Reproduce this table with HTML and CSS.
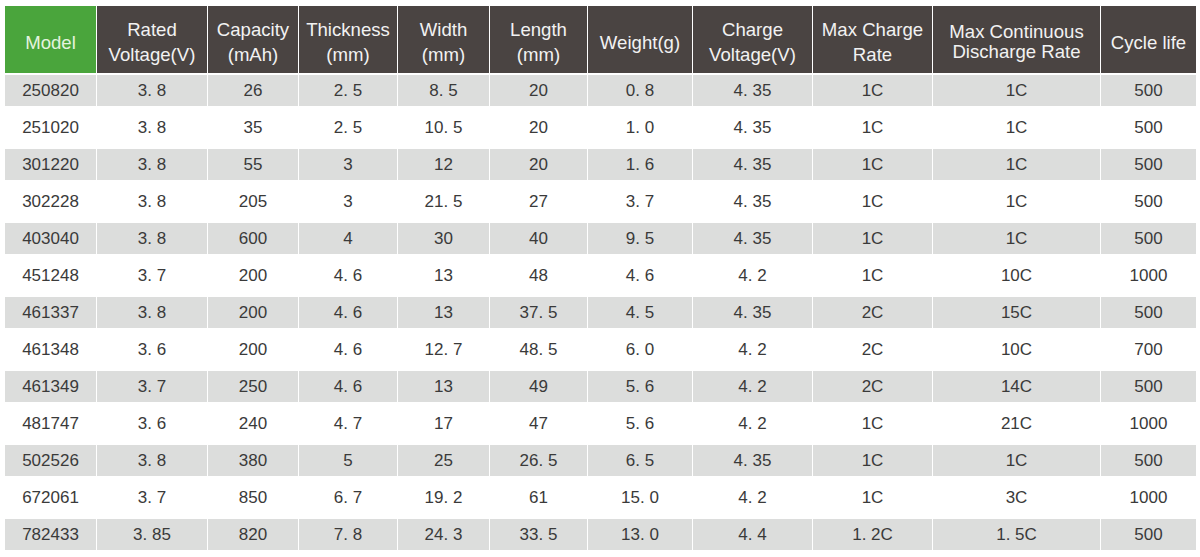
FILE: index.html
```html
<!DOCTYPE html>
<html>
<head>
<meta charset="utf-8">
<link rel="stylesheet" href="styles.css">
</head>
<body>
<div class="table">
  <div class="row head">
    <div class="cell model">Model</div>
    <div class="cell">Rated<br>Voltage(V)</div>
    <div class="cell">Capacity<br>(mAh)</div>
    <div class="cell">Thickness<br>(mm)</div>
    <div class="cell">Width<br>(mm)</div>
    <div class="cell">Length<br>(mm)</div>
    <div class="cell">Weight(g)</div>
    <div class="cell">Charge<br>Voltage(V)</div>
    <div class="cell">Max Charge<br>Rate</div>
    <div class="cell tight">Max Continuous<br>Discharge Rate</div>
    <div class="cell">Cycle life</div>
  </div>
  <div class="body">
    <div class="row shade"><div class="cell">250820</div><div class="cell">3. 8</div><div class="cell">26</div><div class="cell">2. 5</div><div class="cell">8. 5</div><div class="cell">20</div><div class="cell">0. 8</div><div class="cell">4. 35</div><div class="cell">1C</div><div class="cell">1C</div><div class="cell">500</div></div>
    <div class="row"><div class="cell">251020</div><div class="cell">3. 8</div><div class="cell">35</div><div class="cell">2. 5</div><div class="cell">10. 5</div><div class="cell">20</div><div class="cell">1. 0</div><div class="cell">4. 35</div><div class="cell">1C</div><div class="cell">1C</div><div class="cell">500</div></div>
    <div class="row shade"><div class="cell">301220</div><div class="cell">3. 8</div><div class="cell">55</div><div class="cell">3</div><div class="cell">12</div><div class="cell">20</div><div class="cell">1. 6</div><div class="cell">4. 35</div><div class="cell">1C</div><div class="cell">1C</div><div class="cell">500</div></div>
    <div class="row"><div class="cell">302228</div><div class="cell">3. 8</div><div class="cell">205</div><div class="cell">3</div><div class="cell">21. 5</div><div class="cell">27</div><div class="cell">3. 7</div><div class="cell">4. 35</div><div class="cell">1C</div><div class="cell">1C</div><div class="cell">500</div></div>
    <div class="row shade"><div class="cell">403040</div><div class="cell">3. 8</div><div class="cell">600</div><div class="cell">4</div><div class="cell">30</div><div class="cell">40</div><div class="cell">9. 5</div><div class="cell">4. 35</div><div class="cell">1C</div><div class="cell">1C</div><div class="cell">500</div></div>
    <div class="row"><div class="cell">451248</div><div class="cell">3. 7</div><div class="cell">200</div><div class="cell">4. 6</div><div class="cell">13</div><div class="cell">48</div><div class="cell">4. 6</div><div class="cell">4. 2</div><div class="cell">1C</div><div class="cell">10C</div><div class="cell">1000</div></div>
    <div class="row shade"><div class="cell">461337</div><div class="cell">3. 8</div><div class="cell">200</div><div class="cell">4. 6</div><div class="cell">13</div><div class="cell">37. 5</div><div class="cell">4. 5</div><div class="cell">4. 35</div><div class="cell">2C</div><div class="cell">15C</div><div class="cell">500</div></div>
    <div class="row"><div class="cell">461348</div><div class="cell">3. 6</div><div class="cell">200</div><div class="cell">4. 6</div><div class="cell">12. 7</div><div class="cell">48. 5</div><div class="cell">6. 0</div><div class="cell">4. 2</div><div class="cell">2C</div><div class="cell">10C</div><div class="cell">700</div></div>
    <div class="row shade"><div class="cell">461349</div><div class="cell">3. 7</div><div class="cell">250</div><div class="cell">4. 6</div><div class="cell">13</div><div class="cell">49</div><div class="cell">5. 6</div><div class="cell">4. 2</div><div class="cell">2C</div><div class="cell">14C</div><div class="cell">500</div></div>
    <div class="row"><div class="cell">481747</div><div class="cell">3. 6</div><div class="cell">240</div><div class="cell">4. 7</div><div class="cell">17</div><div class="cell">47</div><div class="cell">5. 6</div><div class="cell">4. 2</div><div class="cell">1C</div><div class="cell">21C</div><div class="cell">1000</div></div>
    <div class="row shade"><div class="cell">502526</div><div class="cell">3. 8</div><div class="cell">380</div><div class="cell">5</div><div class="cell">25</div><div class="cell">26. 5</div><div class="cell">6. 5</div><div class="cell">4. 35</div><div class="cell">1C</div><div class="cell">1C</div><div class="cell">500</div></div>
    <div class="row"><div class="cell">672061</div><div class="cell">3. 7</div><div class="cell">850</div><div class="cell">6. 7</div><div class="cell">19. 2</div><div class="cell">61</div><div class="cell">15. 0</div><div class="cell">4. 2</div><div class="cell">1C</div><div class="cell">3C</div><div class="cell">1000</div></div>
    <div class="row shade"><div class="cell">782433</div><div class="cell">3. 85</div><div class="cell">820</div><div class="cell">7. 8</div><div class="cell">24. 3</div><div class="cell">33. 5</div><div class="cell">13. 0</div><div class="cell">4. 4</div><div class="cell">1. 2C</div><div class="cell">1. 5C</div><div class="cell">500</div></div>
  </div>
</div>
</body>
</html>
```

FILE: styles.css
```css
html, body {
  margin: 0;
  padding: 0;
  background: #ffffff;
}

body {
  font-family: "Liberation Sans", Arial, sans-serif;
}

.table {
  margin: 6px 0 0 5px;
  width: 1191px;
  display: flex;
  flex-direction: column;
}

.row {
  display: grid;
  grid-template-columns: 91px 110px 90px 98px 91px 97px 104px 119px 119px 167px 95px;
  column-gap: 1px;
}

.cell {
  display: flex;
  align-items: center;
  justify-content: center;
  text-align: center;
}

.head {
  height: 67px;
  margin-bottom: 2px;
}

.head .cell {
  background: #4a4442;
  color: #f2f2f2;
  font-size: 18.6px;
  line-height: 25px;
  padding-top: 5px;
  box-sizing: border-box;
}

.head .tight {
  line-height: 20px;
}

.head .model {
  background: #4aa53c;
  color: #e4f3df;
}

.body {
  display: flex;
  flex-direction: column;
  gap: 6px;
}

.body .row {
  height: 31px;
}

.body .cell {
  font-size: 17px;
  color: #3a3a3a;
}

.shade .cell {
  background: #dcdddc;
}
```
